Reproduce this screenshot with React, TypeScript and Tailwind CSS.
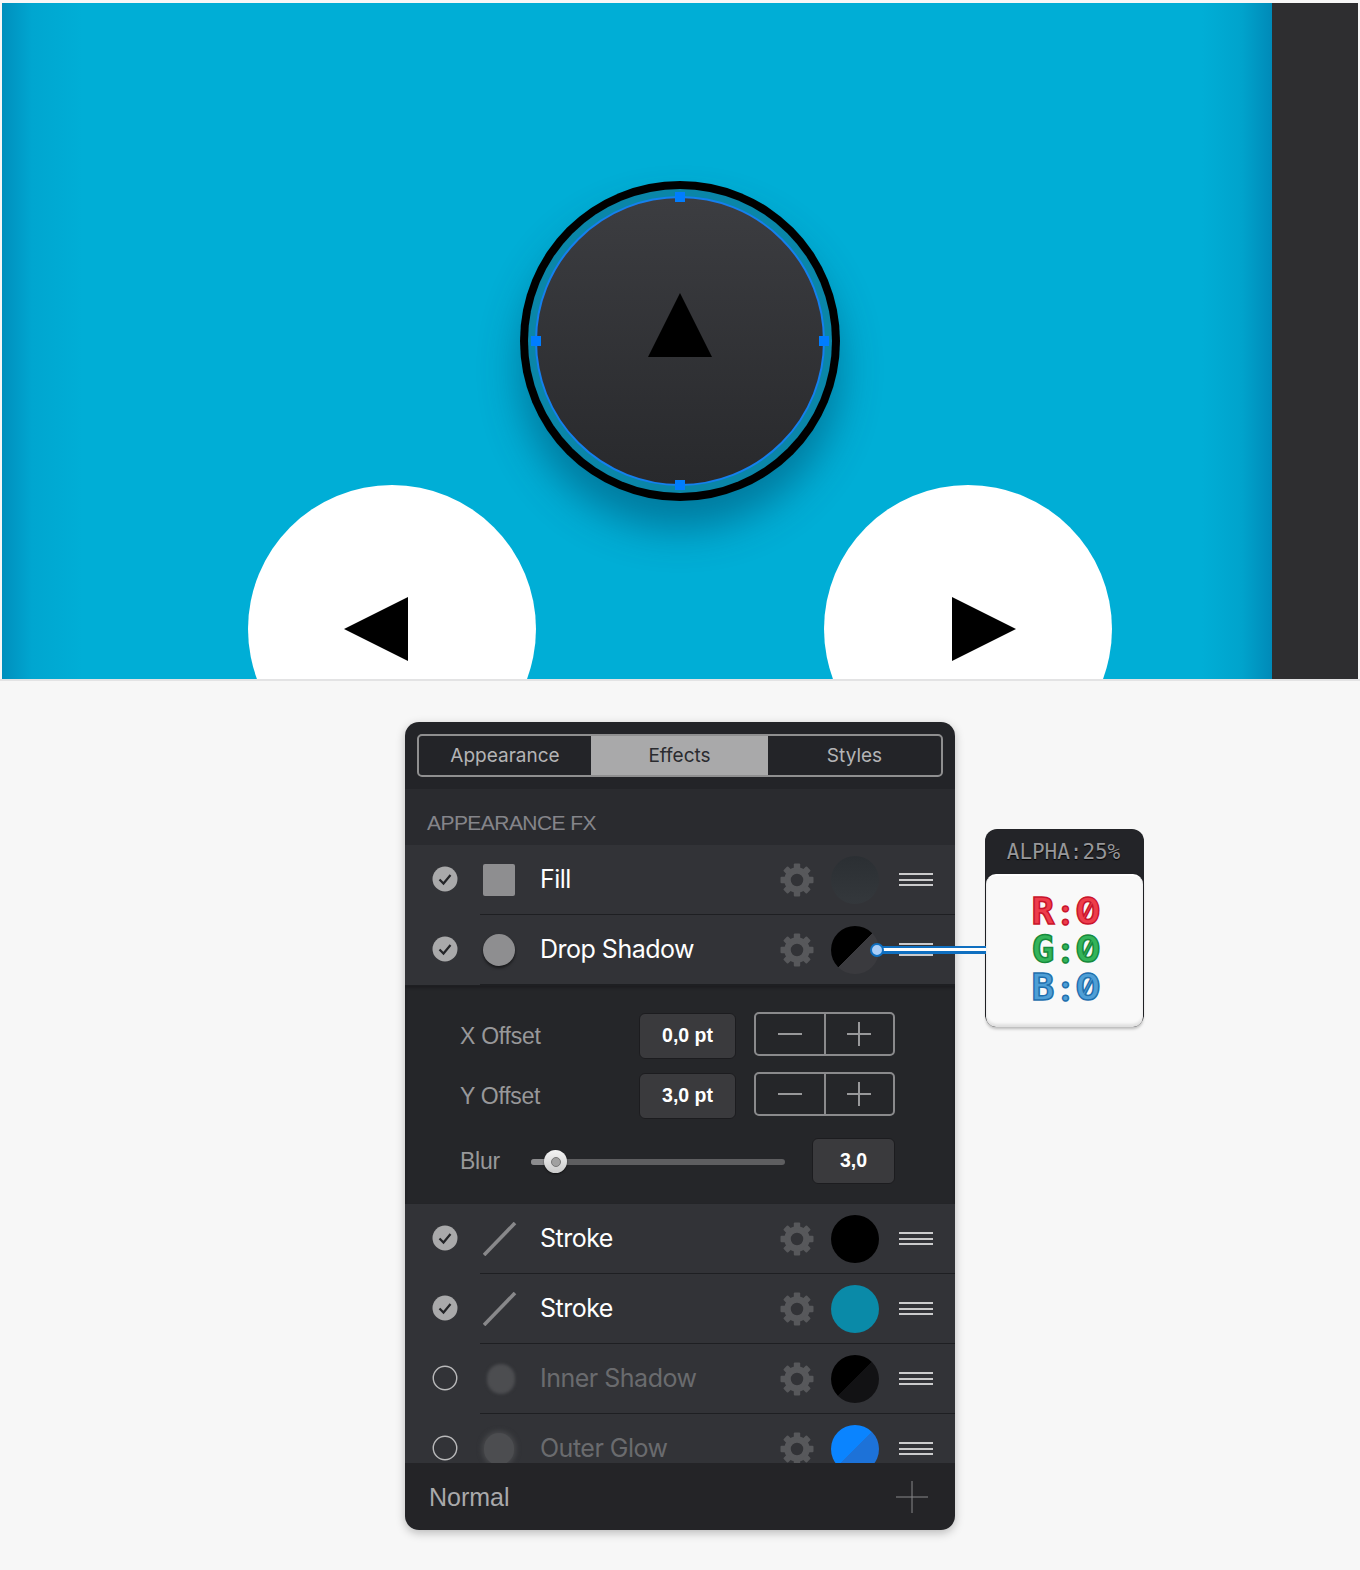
import { clsx } from "clsx";

type RowProps = {
  label: string;
  enabled?: boolean;
  shape: "square" | "circle" | "slash" | "inner" | "glow";
  swatch: string;
};

function CheckMark({ enabled }: { enabled?: boolean }) {
  return (
    <svg width="26" height="26" viewBox="0 0 26 26">
      {enabled ? (
        <>
          <circle cx="13" cy="13" r="12.5" fill="#a9a9aa" />
          <path
            d="M7.5 13.5 L11.5 17.5 L18.5 9"
            fill="none"
            stroke="#232427"
            strokeWidth="2.2"
          />
        </>
      ) : (
        <circle
          cx="13"
          cy="13"
          r="11.75"
          fill="none"
          stroke="#b9b9ba"
          strokeWidth="1.4"
        />
      )}
    </svg>
  );
}

function Gear() {
  return (
    <svg width="34" height="34" viewBox="0 0 34 34" className="shrink-0">
      <circle
        cx="17"
        cy="17"
        r="9.5"
        fill="none"
        stroke="#57585b"
        strokeWidth="6.5"
      />
      {[0, 45, 90, 135, 180, 225, 270, 315].map((deg) => (
        <rect
          key={deg}
          x="13.8"
          y="0.5"
          width="6.4"
          height="6"
          rx="1"
          fill="#57585b"
          transform={`rotate(${deg} 17 17)`}
        />
      ))}
    </svg>
  );
}

function Shape({ shape }: { shape: RowProps["shape"] }) {
  if (shape === "square") {
    return <div className="w-8 h-8 rounded-[2px] bg-[#8e8e90]" />;
  }
  if (shape === "circle") {
    return (
      <div className="w-8 h-8 rounded-full bg-[#8e8e90] shadow-[0_2px_3px_rgba(0,0,0,0.55)]" />
    );
  }
  if (shape === "slash") {
    return (
      <svg width="34" height="34" viewBox="0 0 34 34">
        <path d="M1 33 L32 1" stroke="#88888a" strokeWidth="3.6" />
      </svg>
    );
  }
  if (shape === "inner") {
    return (
      <div className="ml-[4px] w-[28px] h-[30px] rounded-full bg-[#4c4d50] blur-[1.5px]" />
    );
  }
  return (
    <div className="ml-[1px] w-[30px] h-[32px] rounded-full bg-[#4c4d50] shadow-[0_0_5px_2px_#47484b]" />
  );
}

function Row({ label, enabled, shape, swatch }: RowProps) {
  return (
    <div className="flex h-[70px] shrink-0 bg-[#323337]">
      <div className="w-[75px] pl-[27px] flex items-center pb-[2px]">
        <CheckMark enabled={enabled} />
      </div>
      <div className="flex-1 flex items-center border-b border-[#1e1f22]">
        <div className="w-[60px] pl-[3px]">
          <Shape shape={shape} />
        </div>
        <span
          className={clsx(
            "flex-1 pt-[1px] font-['Inter',sans-serif] text-[25px] tracking-[-0.5px]",
            enabled ? "text-white" : "text-[#6a6b6e]",
          )}
        >
          {label}
        </span>
        <Gear />
        <div className={clsx("ml-[17px] w-12 h-12 rounded-full", swatch)} />
        <div className="ml-[20px] mr-[22px] w-[34px] flex flex-col gap-[3.5px]">
          <div className="h-[2px] bg-[#cbcbcc]" />
          <div className="h-[2px] bg-[#cbcbcc]" />
          <div className="h-[2px] bg-[#cbcbcc]" />
        </div>
      </div>
    </div>
  );
}

function Stepper() {
  return (
    <div className="ml-[18px] mb-[3px] w-[141px] h-[44px] flex rounded-[5px] border-2 border-[#8a8a8c]">
      <div className="flex-1 flex items-center justify-center border-r-2 border-[#8a8a8c]">
        <div className="w-6 h-[2px] bg-[#98989a]" />
      </div>
      <div className="flex-1 flex items-center justify-center">
        <svg width="24" height="24" viewBox="0 0 24 24">
          <path d="M0 12 H24 M12 0 V24" stroke="#98989a" strokeWidth="2" />
        </svg>
      </div>
    </div>
  );
}

function ValueBox({ value, className }: { value: string; className: string }) {
  return (
    <div
      className={clsx(
        "h-[46px] flex items-center justify-center rounded-[6px] bg-[#3a3a3d] border border-[#1c1c1f] font-['Liberation_Sans',sans-serif] font-bold text-[19.5px] text-white",
        className,
      )}
    >
      {value}
    </div>
  );
}

function OffsetRow({ label, value }: { label: string; value: string }) {
  return (
    <div className="flex items-center">
      <span className="w-[179px] pt-[2px] font-['Liberation_Sans',sans-serif] text-[23px] tracking-[-0.25px] text-[#98989a]">
        {label}
      </span>
      <ValueBox value={value} className="w-[97px]" />
      <Stepper />
    </div>
  );
}

function PopupLine({ name, className }: { name: string; className: string }) {
  return (
    <div className={clsx("flex items-center h-[38px]", className)}>
      <span className="w-[24px] font-['DejaVu_Sans_Mono',monospace] font-bold text-[38px] leading-[38px]">
        {name}
      </span>
      <span className="w-[20px] text-center font-['Lato',sans-serif] font-black text-[36px] leading-[38px]">
        :
      </span>
      <span className="w-[22px] text-center font-['Inter',sans-serif] font-bold text-[37px] leading-[38px] slashed-zero">
        0
      </span>
    </div>
  );
}

export default function App() {
  return (
    <div className="h-[1570px] bg-[#f7f7f7] pt-[3px] overflow-hidden">
      <div className="relative mx-[2px] h-[676px] overflow-hidden flex flex-col items-center pt-[178px] bg-[linear-gradient(90deg,#008fbd_0px,#00a6d0_30px,#00aed6_80px,#00aed6_1200px,#00a3cc_1240px,#008ab8_1270px)]">
        <div className="relative w-[320px] h-[320px] shrink-0 rounded-full bg-black p-2 shadow-[0_28px_40px_rgba(0,60,90,0.45)]">
          <div className="w-full h-full rounded-full bg-[#0a86a8] p-[7px]">
            <div className="w-full h-full rounded-full border-2 border-[#1580ee] bg-[linear-gradient(180deg,#3c3d41,#28292c)]" />
          </div>
          <div className="absolute left-[155px] top-[11px] w-[10px] h-[10px] bg-[#007dff]" />
          <div className="absolute left-[155px] bottom-[11px] w-[10px] h-[10px] bg-[#007dff]" />
          <div className="absolute left-[11px] top-[155px] w-[10px] h-[10px] bg-[#007dff]" />
          <div className="absolute right-[11px] top-[155px] w-[10px] h-[10px] bg-[#007dff]" />
          <svg
            width="64"
            height="64"
            viewBox="0 0 64 64"
            className="absolute left-[128px] top-[112px]"
          >
            <polygon points="32,0 64,64 0,64" fill="#000" />
          </svg>
        </div>

        <div className="flex gap-[288px] -mt-[16px] shrink-0">
          <div className="w-[288px] h-[288px] rounded-full bg-white flex items-center justify-center pr-[32px]">
            <svg width="64" height="64" viewBox="0 0 64 64">
              <polygon points="0,32 64,0 64,64" fill="#000" />
            </svg>
          </div>
          <div className="w-[288px] h-[288px] rounded-full bg-white flex items-center justify-center pl-[32px]">
            <svg width="64" height="64" viewBox="0 0 64 64">
              <polygon points="64,32 0,0 0,64" fill="#000" />
            </svg>
          </div>
        </div>

        <div className="absolute right-0 top-0 bottom-0 w-[86px] bg-[#2e2e30]" />
      </div>

      <div className="h-[2px] bg-[#e3e3e4]" />

      <div className="flex justify-center pt-[41px]">
        <div className="relative w-[550px] rounded-[14px] shadow-[0_3px_10px_rgba(0,0,0,0.25)]">
          {/* tabs */}
          <div className="h-[67px] px-3 pt-3 rounded-t-[14px] bg-[#232428]">
            <div className="h-[43px] flex rounded-[5px] border-2 border-[#8f8f90] overflow-hidden font-['Inter',sans-serif] text-[19px] leading-[36px]">
              <div className="w-[172px] flex items-center justify-center text-[#b4b4b6]">
                Appearance
              </div>
              <div className="w-[177px] flex items-center justify-center bg-[#a9a9aa] text-[#2a2b2f]">
                Effects
              </div>
              <div className="flex-1 flex items-center justify-center text-[#b4b4b6]">
                Styles
              </div>
            </div>
          </div>

          <div className="h-[56px] pl-[22px] pt-[18px] bg-[#2a2b2f] font-['Liberation_Sans',sans-serif] text-[21px] leading-[32px] tracking-[-0.55px] text-[#85858a]">
            APPEARANCE FX
          </div>

          <div className="h-[618px] flex flex-col overflow-hidden">
            <Row
              label="Fill"
              enabled
              shape="square"
              swatch="bg-[linear-gradient(180deg,#2b2f33,#34383c)]"
            />
            <Row
              label="Drop Shadow"
              enabled
              shape="circle"
              swatch="bg-[linear-gradient(135deg,#000_50%,#3a3a3e_50%)]"
            />

            <div className="h-[219px] shrink-0 pt-[26px] pl-[55px] bg-[#252629] border-t border-[#1e1f22] shadow-[inset_0_2px_3px_rgba(0,0,0,0.25)]">
              <OffsetRow label="X Offset" value="0,0 pt" />
              <div className="mt-[13px]">
                <OffsetRow label="Y Offset" value="3,0 pt" />
              </div>
              <div className="mt-[19px] flex items-center">
                <span className="w-[71px] font-['Liberation_Sans',sans-serif] text-[23px] tracking-[-0.25px] text-[#98989a]">
                  Blur
                </span>
                <div className="relative mt-[2px] w-[254px] h-[6px] rounded-full bg-[#5e5e60]">
                  <div className="w-[24px] h-full rounded-l-full bg-[#8c8c8e]" />
                  <div className="absolute left-[13px] -top-[9px] w-[23px] h-[23px] rounded-full bg-[linear-gradient(180deg,#f4f4f4,#c9c9c9)] shadow-[0_1px_2px_rgba(0,0,0,0.6)] flex items-center justify-center">
                    <div className="w-[10px] h-[10px] rounded-full bg-[#a0a0a0] border border-[#777]" />
                  </div>
                </div>
                <ValueBox value="3,0" className="ml-[27px] w-[83px]" />
              </div>
            </div>

            <Row label="Stroke" enabled shape="slash" swatch="bg-black" />
            <Row label="Stroke" enabled shape="slash" swatch="bg-[#0a8aa8]" />
            <Row
              label="Inner Shadow"
              shape="inner"
              swatch="bg-[linear-gradient(135deg,#000_50%,#121214_50%)]"
            />
            <Row
              label="Outer Glow"
              shape="glow"
              swatch="bg-[linear-gradient(135deg,#0a84ff_50%,#1d72d8_50%)]"
            />
          </div>

          <div className="h-[67px] pl-[24px] pr-[27px] flex items-center justify-between rounded-b-[14px] bg-[#242427]">
            <span className="pt-[2px] font-['Liberation_Sans',sans-serif] text-[25px] text-[#a9a9ab]">
              Normal
            </span>
            <svg width="32" height="32" viewBox="0 0 32 32">
              <path d="M0 16 H32 M16 0 V32" stroke="#87878a" strokeWidth="1" />
            </svg>
          </div>

          {/* colour note beside the panel */}
          <div className="absolute left-[580px] top-[107px] w-[159px] h-[198px] rounded-[12px] bg-[#232428]">
            <div className="h-[45px] pt-[2px] pr-[2px] flex items-center justify-center font-['DejaVu_Sans_Mono',monospace] text-[21px] tracking-[-0.05px] text-[#97979a] [text-shadow:0_1px_1px_#000]">
              ALPHA:25%
            </div>
            <div className="mx-[1px] h-[153px] pt-[16px] rounded-[10px] bg-[#f9f9f9] border-t-2 border-white shadow-[inset_0_-3px_3px_rgba(0,0,0,0.1),0_2px_3px_rgba(0,0,0,0.25)] flex flex-col items-center">
              <PopupLine
                name="R"
                className="text-[#ee3d4b] [-webkit-text-stroke:1.5px_#c9142c]"
              />
              <PopupLine
                name="G"
                className="text-[#34b45a] [-webkit-text-stroke:1.5px_#168a3c]"
              />
              <PopupLine
                name="B"
                className="text-[#4f9fd6] [-webkit-text-stroke:1.5px_#1f70ae]"
              />
            </div>
          </div>

          {/* connector from the swatch to the note */}
          <div className="absolute left-[472px] top-[224px] w-[109px] h-[8px] bg-white border-t-2 border-b-[3px] border-[#0f6fc0]" />
          <div className="absolute left-[465px] top-[221px] w-[14px] h-[14px] rounded-full bg-[#a9cdf7] border-2 border-[#0f6fc0]" />
        </div>
      </div>
    </div>
  );
}
